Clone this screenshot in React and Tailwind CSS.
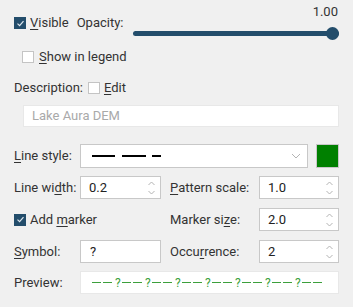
import React from "react";

const font = { fontFamily: "Roboto, 'Liberation Sans', sans-serif" };

function Check({ checked }) {
  if (checked) {
    return (
      <span className="flex h-[12px] w-[12px] shrink-0 items-center justify-center bg-[#234d6b]">
        <svg width="9" height="9" viewBox="0 0 9 9" fill="none">
          <path d="M1.5 4.6 L3.6 6.6 L7.5 2.2" stroke="#dfe8ef" strokeWidth="1.2" />
        </svg>
      </span>
    );
  }
  return <span className="block h-[12px] w-[12px] shrink-0 border border-[#c4c4c4] bg-white" />;
}

function U({ children }) {
  return <span className="underline decoration-1 underline-offset-[2px]">{children}</span>;
}

function Spin({ value, className = "" }) {
  return (
    <div className={"flex h-[23px] items-center border border-[#c8c8c8] bg-white pl-[8px] pr-[4px] text-[#222] " + className}>
      <span className="flex-1">{value}</span>
      <svg width="9" height="16" viewBox="0 0 9 16" fill="none">
        <path d="M1.5 5 L4.5 2 L7.5 5" stroke="#b4b4b4" strokeWidth="1" />
        <path d="M1.5 11 L4.5 14 L7.5 11" stroke="#b4b4b4" strokeWidth="1" />
      </svg>
    </div>
  );
}

export default function App() {
  const units = [0, 1, 2, 3, 4, 5, 6];
  return (
    <div className="h-[307px] w-[353px] overflow-hidden bg-[#f0f0f0] px-[14px] text-[13px] text-[#333]" style={font}>
      <div className="flex h-[42px] items-start">
        <div className="mt-[17px] flex h-[12px] items-center">
          <Check checked />
          <span className="ml-[4px]"><U>V</U>isible</span>
          <span className="ml-[8px]">Opacity:</span>
        </div>
        <div className="ml-auto flex w-[206px] flex-col">
          <div className="mt-[4px] pr-[1px] text-right leading-[15px]">1.00</div>
          <div className="relative mt-[12px] h-[5px] rounded-full bg-[#234d6b]">
            <span className="absolute right-0 top-[-4px] h-[13px] w-[13px] rounded-full bg-[#234d6b]" />
          </div>
        </div>
      </div>

      <div className="ml-[8px] mt-[9px] flex h-[12px] items-center">
        <Check />
        <span className="ml-[5px]"><U>S</U>how in legend</span>
      </div>

      <div className="mt-[19px] flex h-[12px] items-center">
        <span>Description:</span>
        <div className="ml-[5px]"><Check /></div>
        <span className="ml-[4px]"><U>E</U>dit</span>
      </div>

      <div className="ml-[9px] mt-[11px] flex h-[22px] w-[316px] items-center border border-[#e8e8e8] bg-white pl-[8px] text-[#a9a9a9]">
        Lake Aura DEM
      </div>

      <div className="mt-[17px] flex h-[24px] items-center">
        <span className="w-[66px]"><U>L</U>ine style:</span>
        <div className="flex h-[24px] w-[228px] items-center border border-[#c8c8c8] bg-white pl-[11px] pr-[6px]">
          <svg width="70" height="4" viewBox="0 0 70 4">
            <path d="M0 2 H23 M30 2 H54 M60 2 H69" stroke="#000" strokeWidth="2" />
          </svg>
          <svg className="ml-auto" width="10" height="6" viewBox="0 0 10 6" fill="none">
            <path d="M1 1 L5 5 L9 1" stroke="#b4b4b4" strokeWidth="1" />
          </svg>
        </div>
        <span className="ml-[8px] h-[24px] w-[23px] border border-[#c8c8c8] bg-[#008000]" />
      </div>

      <div className="mt-[8px] flex h-[23px] items-center">
        <span className="w-[66px]">Line wi<U>d</U>th:</span>
        <Spin value="0.2" className="w-[81px]" />
        <span className="ml-[9px] w-[89px]"><U>P</U>attern scale:</span>
        <Spin value="1.0" className="w-[80px]" />
      </div>

      <div className="mt-[9px] flex h-[23px] items-center">
        <div className="flex w-[156px] items-center">
          <Check checked />
          <span className="ml-[4px]">Add <U>m</U>arker</span>
        </div>
        <span className="w-[89px]">Marker si<U>z</U>e:</span>
        <Spin value="2.0" className="w-[80px]" />
      </div>

      <div className="mt-[9px] flex h-[23px] items-center">
        <span className="w-[66px]"><U>S</U>ymbol:</span>
        <div className="flex h-[23px] w-[81px] items-center border border-[#c8c8c8] bg-white pl-[9px] text-[#222]">?</div>
        <span className="ml-[9px] w-[89px]">Occu<U>r</U>rence:</span>
        <Spin value="2" className="w-[80px]" />
      </div>

      <div className="mt-[8px] flex h-[23px] items-center">
        <span className="w-[66px]">Preview:</span>
        <div className="flex h-[23px] w-[259px] items-center border border-[#e8e8e8] bg-white pl-[11px] text-[12px] text-[#3ca03c]">
          {units.map((i) => (
            <span key={i} className="flex w-[30px] items-center">
              <span className="h-[1px] w-[9px] bg-[#3ca03c]" />
              <span className="ml-[2px] h-[1px] w-[9px] bg-[#3ca03c]" />
              <span className="ml-[3px] leading-none">?</span>
            </span>
          ))}
          <span className="h-[1px] w-[9px] bg-[#3ca03c]" />
          <span className="ml-[2px] h-[1px] w-[9px] bg-[#3ca03c]" />
        </div>
      </div>
    </div>
  );
}
